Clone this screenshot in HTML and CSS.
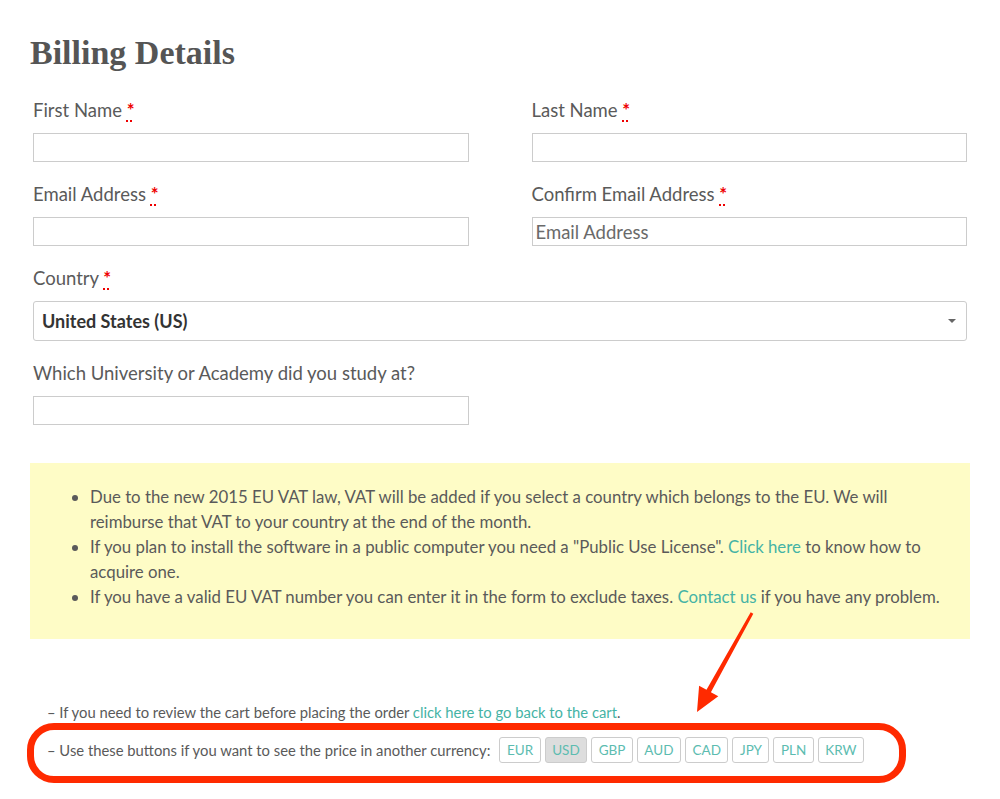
FILE: index.html
```html
<!DOCTYPE html>
<html lang="en">
<head>
<meta charset="utf-8">
<title>Billing Details</title>
<link rel="stylesheet" href="styles.css">
</head>
<body>
<div class="page">
  <h1 class="title">Billing Details</h1>

  <div class="form-grid">
    <div class="field">
      <label class="label">First Name <abbr class="req" title="required">*</abbr></label>
      <input class="text-input" type="text">
    </div>
    <div class="field">
      <label class="label">Last Name <abbr class="req" title="required">*</abbr></label>
      <input class="text-input" type="text">
    </div>
    <div class="field">
      <label class="label">Email Address <abbr class="req" title="required">*</abbr></label>
      <input class="text-input" type="text">
    </div>
    <div class="field">
      <label class="label">Confirm Email Address <abbr class="req" title="required">*</abbr></label>
      <input class="text-input" type="text" placeholder="Email Address">
    </div>
    <div class="field full">
      <label class="label">Country <abbr class="req" title="required">*</abbr></label>
      <div class="select-box">
        <span class="select-value">United States (US)</span>
        <svg class="caret" width="8" height="4" viewBox="0 0 8 4"><path d="M0 0H8L4 4Z" fill="#666"/></svg>
      </div>
    </div>
    <div class="field">
      <label class="label">Which University or Academy did you study at?</label>
      <input class="text-input" type="text">
    </div>
  </div>

  <div class="notice">
    <ul class="notice-list">
      <li>Due to the new 2015 EU VAT law, VAT will be added if you select a country which belongs to the EU. We will reimburse that VAT to your country at the end of the month.</li>
      <li>If you plan to install the software in a public computer you need a "Public Use License". <a class="link" href="#">Click here</a> to know how to acquire one.</li>
      <li>If you have a valid EU VAT number you can enter it in the form to exclude taxes. <a class="link" href="#">Contact us</a> if you have any problem.</li>
    </ul>
  </div>

  <div class="cart-notes">
    <p class="note">– If you need to review the cart before placing the order <a class="link" href="#">click here to go back to the cart</a>.</p>
    <div class="note currency-row">
      <span>– Use these buttons if you want to see the price in another currency:</span>
      <div class="currency-buttons">
        <span class="cur-btn">EUR</span>
        <span class="cur-btn active">USD</span>
        <span class="cur-btn">GBP</span>
        <span class="cur-btn">AUD</span>
        <span class="cur-btn">CAD</span>
        <span class="cur-btn">JPY</span>
        <span class="cur-btn">PLN</span>
        <span class="cur-btn">KRW</span>
      </div>
    </div>
  </div>

  <div class="annot-box"></div>
  <svg class="annot-arrow" width="1000" height="799" viewBox="0 0 1000 799">
    <polygon fill="#ff2a00" points="750.7,612.3 753.3,613.7 710.9,692.2 718.3,696.3 697,712 699.1,685.7 706.5,689.8"/>
  </svg>
</div>
</body>
</html>
```

FILE: styles.css
```css
* { box-sizing: border-box; }

html, body {
  margin: 0;
  padding: 0;
  background: #fff;
}

body {
  font-family: Lato, "Open Sans", sans-serif;
  color: #555;
}

.page {
  position: relative;
  width: 1000px;
  height: 799px;
  overflow: hidden;
}

.title {
  margin: 33px 0 0 30px;
  font-family: "Liberation Serif", serif;
  font-weight: 700;
  font-size: 34px;
  line-height: 40px;
  color: #555;
}

.form-grid {
  margin: 25px 0 0 33px;
  width: 934px;
  display: grid;
  grid-template-columns: 1fr 1fr;
  column-gap: 63px;
}

.field {
  display: flex;
  flex-direction: column;
  margin-bottom: 20px;
}

.field.full {
  grid-column: 1 / 3;
}

.label {
  font-size: 18.5px;
  line-height: 24px;
  margin-bottom: 11px;
  color: #5a5a5a;
}

.req {
  color: #e00;
  font-weight: 700;
  text-decoration: underline dotted #e00;
  text-decoration-thickness: 2px;
  text-underline-offset: 3px;
}

.text-input {
  height: 29px;
  width: 100%;
  border: 1px solid #ccc;
  border-radius: 0;
  padding: 0 3px;
  font-family: Lato, sans-serif;
  font-size: 18.5px;
  color: #555;
  background: #fff;
  outline: none;
}

.text-input::placeholder {
  color: #6a6a6a;
  opacity: 1;
}

.select-box {
  height: 40px;
  border: 1px solid #ccc;
  border-radius: 3px;
  display: flex;
  align-items: center;
  justify-content: space-between;
  padding: 0 10px 0 8px;
}

.select-value {
  font-size: 18px;
  font-weight: 700;
  color: #333;
}

.caret {
  display: block;
}

.notice {
  margin: 18px 0 0 30px;
  width: 940px;
  background: #fefcc6;
  padding: 21px 8px 30px 0;
}

.notice-list {
  margin: 0;
  padding: 0 0 0 60px;
  font-size: 16.8px;
  line-height: 25px;
  color: #5a5a5a;
}

.link {
  color: #45b3a5;
  text-decoration: none;
}

.cart-notes {
  margin: 62px 0 0 47px;
  font-size: 14.8px;
  color: #5a5a5a;
}

.note {
  margin: 0;
  line-height: 22px;
}

.currency-row {
  margin-top: 14px;
  display: flex;
  align-items: center;
  gap: 9px;
}

.currency-buttons {
  display: flex;
  gap: 4px;
}

.cur-btn {
  display: inline-flex;
  align-items: center;
  height: 26px;
  padding: 0 6.5px;
  border: 1px solid #ccc;
  border-radius: 3px;
  font-size: 13.5px;
  color: #5cbcb0;
  background: #fff;
}

.cur-btn.active {
  background: #ddd;
}

.annot-box {
  position: absolute;
  left: 27px;
  top: 723px;
  width: 879px;
  height: 60px;
  border: 7px solid #ff2a00;
  border-radius: 27px;
  pointer-events: none;
}

.annot-arrow {
  position: absolute;
  left: 0;
  top: 0;
  pointer-events: none;
}
```
